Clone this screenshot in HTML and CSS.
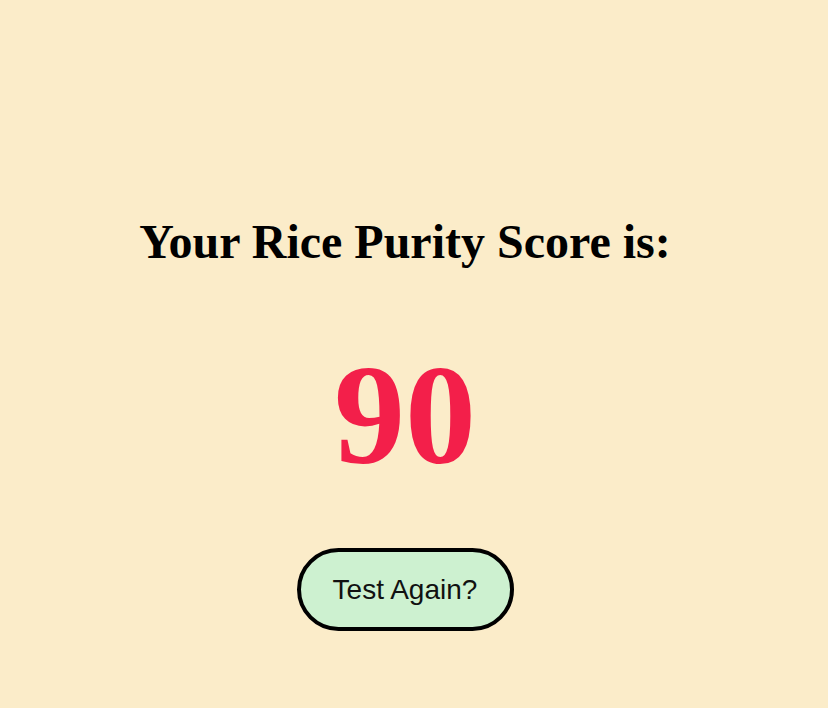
FILE: index.html
```html
<!DOCTYPE html>
<html>
<head>
<meta charset="utf-8">
<link rel="stylesheet" href="styles.css">
</head>
<body>
<main class="result">
  <h1 class="title">Your Rice Purity Score is:</h1>
  <div class="score">90</div>
  <button class="again">Test Again?</button>
</main>
</body>
</html>
```
FILE: styles.css
```css
html, body {
  margin: 0;
  padding: 0;
  background: #fbecc9;
  height: 100%;
}
.result {
  width: 810px;
  display: flex;
  flex-direction: column;
  align-items: center;
  padding-top: 212px;
}
.title {
  margin: 0;
  font-family: "Liberation Serif", serif;
  font-weight: bold;
  font-size: 48px;
  line-height: 60px;
  color: #000;
}
.score {
  margin-top: 72px;
  font-family: "Liberation Serif", serif;
  font-weight: bold;
  font-size: 142px;
  line-height: 142px;
  color: #f31f4a;
}
.again {
  margin-top: 62px;
  width: 217px;
  height: 83px;
  border: 4px solid #000;
  border-radius: 42px;
  background: #cdf1d0;
  font-family: "Liberation Sans", Arial, sans-serif;
  font-size: 28px;
  color: #111;
  padding: 0;
}
```
